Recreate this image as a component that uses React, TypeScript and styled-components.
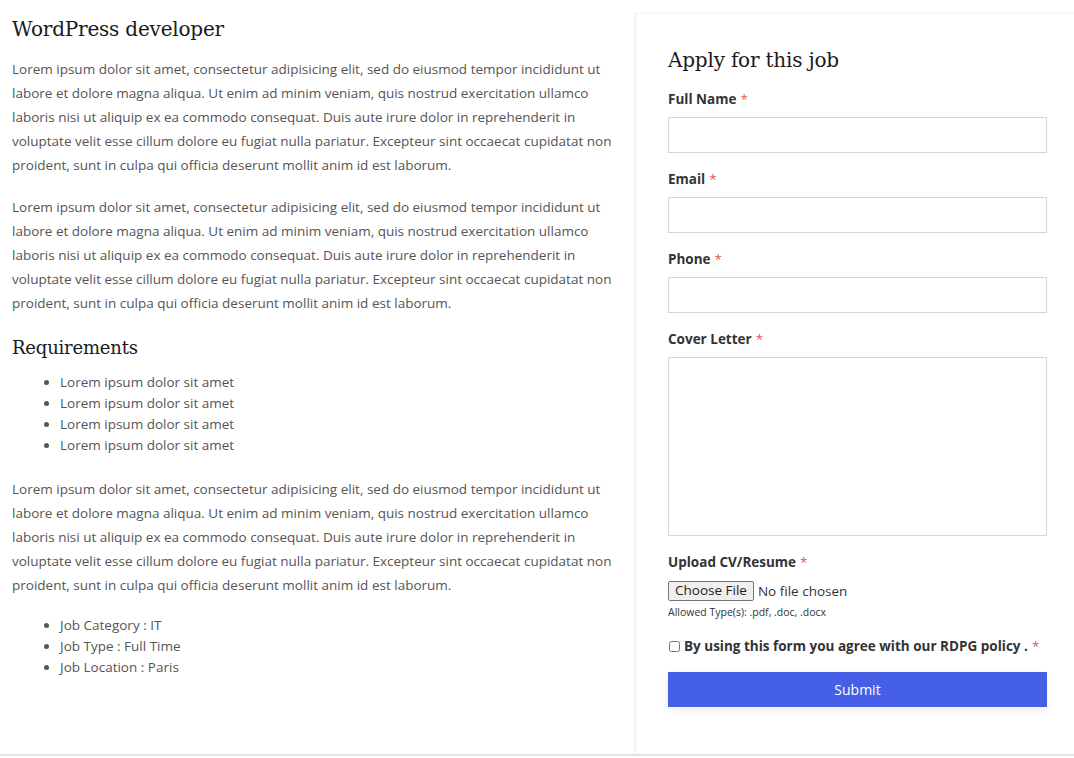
import React from "react";
import styled, { createGlobalStyle } from "styled-components";

const GlobalStyle = createGlobalStyle`
  html, body {
    margin: 0;
    padding: 0;
    background: #ffffff;
    overflow: hidden;
  }
  body {
    font-family: "Open Sans", "Noto Sans", sans-serif;
    color: #555555;
  }
`;

const Page = styled.div`
  width: 1080px;
  height: 756px;
  display: flex;
  align-items: stretch;
  border-bottom: 2px solid #e4e4e4;
  box-sizing: border-box;
`;

const Main = styled.main`
  width: 615px;
  padding: 14px 0 0 12px;
  box-sizing: content-box;
  margin-right: 8px;
`;

const Title = styled.h1`
  font-family: "DejaVu Serif", "Liberation Serif", serif;
  font-weight: 400;
  font-size: 20px;
  line-height: 30px;
  color: #1a1a1a;
  margin: 0 0 13px;
  letter-spacing: -0.2px;
`;

const SubTitle = styled.h2`
  font-family: "DejaVu Serif", "Liberation Serif", serif;
  font-weight: 400;
  font-size: 18px;
  line-height: 28px;
  color: #1a1a1a;
  margin: 19px 0 10px;
  letter-spacing: -0.2px;
`;

const Para = styled.p`
  font-size: 13.5px;
  line-height: 24px;
  margin: 0 0 18px;
  color: #555555;
`;

const List = styled.ul<{ $after?: number }>`
  margin: 0 0 ${(p) => p.$after ?? 0}px;
  padding-left: 48px;
  font-size: 13.5px;
  line-height: 21px;
  color: #555555;
`;

const Aside = styled.aside`
  width: 445px;
  margin-top: 13px;
  border-left: 1px solid #efefef;
  border-top: 1px solid #f2f2f2;
  box-shadow: -1px 0 3px rgba(0, 0, 0, 0.03);
  padding: 31px 33px 0 32px;
  box-sizing: border-box;
`;

const FormTitle = styled.h2`
  font-family: "DejaVu Serif", "Liberation Serif", serif;
  font-weight: 400;
  font-size: 20px;
  line-height: 30px;
  color: #1a1a1a;
  margin: 0 0 14px;
  letter-spacing: -0.2px;
`;

const Field = styled.div`
  display: flex;
  flex-direction: column;
  margin-bottom: 16px;
`;

const Label = styled.label`
  display: block;
  font-size: 13.5px;
  line-height: 21px;
  font-weight: 700;
  color: #333333;
  margin-bottom: 7px;
`;

const Req = styled.span`
  color: #e0555a;
  font-weight: 400;
  margin-left: 4px;
`;

const TextInput = styled.input`
  height: 36px;
  border: 1px solid #d6d6d6;
  border-radius: 0;
  box-sizing: border-box;
  font-family: inherit;
  font-size: 14px;
  padding: 0 10px;
  outline: none;
`;

const TextArea = styled.textarea`
  height: 179px;
  border: 1px solid #d6d6d6;
  border-radius: 0;
  box-sizing: border-box;
  font-family: inherit;
  font-size: 14px;
  padding: 10px;
  resize: none;
  outline: none;
`;

const FileRow = styled.div`
  display: flex;
  align-items: center;
  gap: 4px;
  height: 21px;
  font-size: 13.5px;
  color: #333333;
  margin-top: 0;
`;

const FileButton = styled.button`
  font-family: "Open Sans", sans-serif;
  font-size: 13.5px;
  line-height: 17px;
  height: 20px;
  padding: 0 6px;
  background: #efefef;
  border: 1px solid #767676;
  border-radius: 2px;
  color: #222222;
`;

const Hint = styled.div`
  font-size: 10.5px;
  line-height: 16px;
  color: #333333;
  margin-top: 3px;
`;

const CheckRow = styled.label`
  display: flex;
  align-items: center;
  gap: 4px;
  margin-top: 16px;
  font-size: 13.5px;
  line-height: 21px;
  font-weight: 700;
  color: #333333;
  white-space: nowrap;
`;

const Check = styled.input`
  width: 11px;
  height: 11px;
  margin: 0 0 0 1px;
`;

const Submit = styled.button`
  margin-top: 15px;
  width: 100%;
  height: 35px;
  border: none;
  background: #4560e7;
  color: #ffffff;
  font-family: "Open Sans", sans-serif;
  font-size: 14px;
  box-shadow: 0 3px 8px rgba(0, 0, 0, 0.08);
`;

const lorem =
  "Lorem ipsum dolor sit amet, consectetur adipisicing elit, sed do eiusmod tempor incididunt ut labore et dolore magna aliqua. Ut enim ad minim veniam, quis nostrud exercitation ullamco laboris nisi ut aliquip ex ea commodo consequat. Duis aute irure dolor in reprehenderit in voluptate velit esse cillum dolore eu fugiat nulla pariatur. Excepteur sint occaecat cupidatat non proident, sunt in culpa qui officia deserunt mollit anim id est laborum.";

export default function App() {
  return (
    <>
      <GlobalStyle />
      <Page>
        <Main>
          <Title>WordPress developer</Title>
          <Para>{lorem}</Para>
          <Para>{lorem}</Para>
          <SubTitle>Requirements</SubTitle>
          <List $after={21}>
            <li>Lorem ipsum dolor sit amet</li>
            <li>Lorem ipsum dolor sit amet</li>
            <li>Lorem ipsum dolor sit amet</li>
            <li>Lorem ipsum dolor sit amet</li>
          </List>
          <Para>{lorem}</Para>
          <List>
            <li>Job Category : IT</li>
            <li>Job Type : Full Time</li>
            <li>Job Location : Paris</li>
          </List>
        </Main>
        <Aside>
          <FormTitle>Apply for this job</FormTitle>
          <Field>
            <Label>
              Full Name<Req>*</Req>
            </Label>
            <TextInput type="text" />
          </Field>
          <Field>
            <Label>
              Email<Req>*</Req>
            </Label>
            <TextInput type="email" />
          </Field>
          <Field>
            <Label>
              Phone<Req>*</Req>
            </Label>
            <TextInput type="tel" />
          </Field>
          <Field>
            <Label>
              Cover Letter<Req>*</Req>
            </Label>
            <TextArea />
          </Field>
          <Label>
            Upload CV/Resume<Req>*</Req>
          </Label>
          <FileRow>
            <FileButton type="button">Choose File</FileButton>
            <span>No file chosen</span>
          </FileRow>
          <Hint>Allowed Type(s): .pdf, .doc, .docx</Hint>
          <CheckRow>
            <Check type="checkbox" />
            <span>
              By using this form you agree with our RDPG policy .<Req>*</Req>
            </span>
          </CheckRow>
          <Submit type="button">Submit</Submit>
        </Aside>
      </Page>
    </>
  );
}
